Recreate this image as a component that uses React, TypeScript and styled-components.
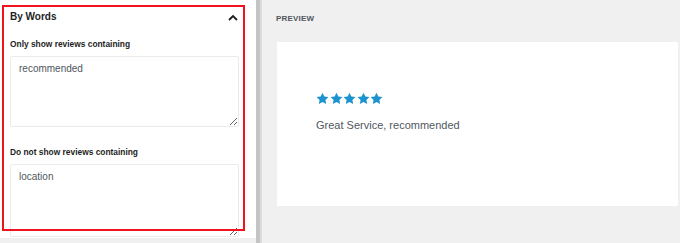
import React from 'react'
import styled, { createGlobalStyle } from 'styled-components'

const GlobalStyle = createGlobalStyle`
  html, body {
    margin: 0;
    padding: 0;
    background: #f0f0f0;
    font-family: "Liberation Sans", Arial, sans-serif;
  }
`

const Page = styled.div`
  width: 680px;
  height: 243px;
  overflow: hidden;
  display: grid;
  grid-template-columns: 256px 4px 2px 1fr;
  background: #f0f0f0;
`

const Sidebar = styled.aside`
  position: relative;
  height: 238px;
  overflow: hidden;
  background: #fff;
  display: flex;
  flex-direction: column;
`

const Highlight = styled.div`
  position: absolute;
  left: 2px;
  top: 5px;
  width: 243px;
  height: 226px;
  box-sizing: border-box;
  border: 2px solid #f0121c;
  pointer-events: none;
`

const Divider = styled.div<{ $shade: string }>`
  background: ${(p) => p.$shade};
`

const PanelHeader = styled.div`
  display: flex;
  align-items: center;
  justify-content: space-between;
  padding: 10px 18px 0 10px;
  height: 14px;
`

const PanelTitle = styled.h2`
  margin: 0;
  font-size: 10px;
  line-height: 14px;
  font-weight: 700;
  color: #1e1e1e;
`

const Body = styled.div`
  display: flex;
  flex-direction: column;
  padding: 14px 16px 0 10px;
`

const Field = styled.label<{ $gap?: number }>`
  display: flex;
  flex-direction: column;
  gap: 6px;
  margin-top: ${(p) => p.$gap ?? 0}px;
`

const FieldLabel = styled.span`
  font-size: 8.4px;
  line-height: 12px;
  font-weight: 700;
  color: #1e1e1e;
`

const TextBox = styled.textarea<{ $h: number }>`
  display: block;
  box-sizing: border-box;
  width: 229px;
  height: ${(p) => p.$h}px;
  margin: 0;
  padding: 5px 8px;
  border: 1px solid #ebebeb;
  border-radius: 2px;
  font-family: "Liberation Sans", Arial, sans-serif;
  font-size: 10px;
  line-height: 14px;
  color: #50575e;
  background: #fff;
  outline: none;
`

const Main = styled.main`
  display: flex;
  flex-direction: column;
  padding: 14px 2px 0 15px;
`

const SectionLabel = styled.div`
  font-size: 8px;
  line-height: 10px;
  font-weight: 700;
  letter-spacing: 0.2px;
  color: #50575e;
  margin-left: -1px;
`

const Card = styled.div`
  margin-top: 18px;
  height: 164px;
  background: #fff;
  padding: 50px 39px 0;
  box-sizing: border-box;
`

const Stars = styled.div`
  display: flex;
  gap: 0.6px;
  height: 13px;
`

const Quote = styled.p`
  margin: 13px 0 0;
  font-size: 11px;
  line-height: 14px;
  color: #50575e;
`

const Star = () => (
  <svg width="13" height="13" viewBox="0 0 20 20" aria-hidden>
    <path
      fill="#1a93cf"
      d="M10 1l2.8 5.8 6.3.9-4.6 4.5 1.1 6.3L10 15.5l-5.6 3 1.1-6.3L.9 7.7l6.3-.9z"
    />
  </svg>
)

const ChevronUp = () => (
  <svg width="10" height="7" viewBox="0 0 10 7" aria-hidden>
    <path d="M1 6l4-4 4 4" fill="none" stroke="#1e1e1e" strokeWidth="1.8" />
  </svg>
)

const App: React.FC = () => (
  <>
    <GlobalStyle />
    <Page>
      <Sidebar>
        <PanelHeader>
          <PanelTitle>By Words</PanelTitle>
          <ChevronUp />
        </PanelHeader>
        <Body>
          <Field>
            <FieldLabel>Only show reviews containing</FieldLabel>
            <TextBox $h={71} defaultValue="recommended" readOnly />
          </Field>
          <Field $gap={19}>
            <FieldLabel>Do not show reviews containing</FieldLabel>
            <TextBox $h={73} defaultValue="location" readOnly />
          </Field>
        </Body>
        <Highlight />
      </Sidebar>
      <Divider $shade="#c4c4c4" />
      <Divider $shade="#dcdcdc" />
      <Main>
        <SectionLabel>PREVIEW</SectionLabel>
        <Card>
          <Stars>
            {[0, 1, 2, 3, 4].map((i) => (
              <Star key={i} />
            ))}
          </Stars>
          <Quote>Great Service, recommended</Quote>
        </Card>
      </Main>
    </Page>
  </>
)

export default App
